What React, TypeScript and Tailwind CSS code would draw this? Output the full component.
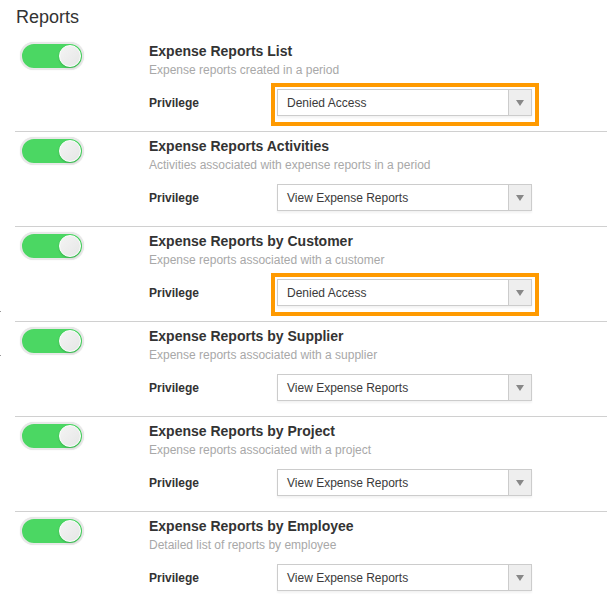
import React from "react";

type Item = { title: string; desc: string; value: string; highlight?: boolean };

const items: Item[] = [
  { title: "Expense Reports List", desc: "Expense reports created in a period", value: "Denied Access", highlight: true },
  { title: "Expense Reports Activities", desc: "Activities associated with expense reports in a period", value: "View Expense Reports" },
  { title: "Expense Reports by Customer", desc: "Expense reports associated with a customer", value: "Denied Access", highlight: true },
  { title: "Expense Reports by Supplier", desc: "Expense reports associated with a supplier", value: "View Expense Reports" },
  { title: "Expense Reports by Project", desc: "Expense reports associated with a project", value: "View Expense Reports" },
  { title: "Expense Reports by Employee", desc: "Detailed list of reports by employee", value: "View Expense Reports" },
];

function Toggle() {
  return (
    <div className="relative w-[64px] h-[28px] rounded-full bg-[#4bd763] border-2 border-[#e8e8e8] shadow-[0_0_1px_rgba(0,0,0,0.15)]">
      <div className="absolute right-[1px] top-[1px] w-[22px] h-[22px] rounded-full bg-gradient-to-br from-[#f4f4f4] to-[#e6e6e6] border border-white shadow-[0_1px_2px_rgba(0,0,0,0.2)]" />
    </div>
  );
}

function Select({ value, highlight }: { value: string; highlight?: boolean }) {
  return (
    <div className="relative w-[255px] h-[27px]">
      {highlight && (
        <div className="absolute left-[-6px] top-[-6px] right-[-7px] bottom-[-10px] border-4 border-[#ff9a00]" />
      )}
      <div className="relative flex h-full w-full border border-[#cccccc] bg-white shadow-[0_2px_2px_rgba(0,0,0,0.05)]">
        <div className="flex-1 flex items-center pl-[9px] text-[12px] text-[#3a3a3a]">{value}</div>
        <div className="w-[23px] h-full flex items-center justify-center bg-[#eeeeee] border-l border-[#cccccc]">
          <svg width="8" height="6" viewBox="0 0 8 6">
            <path d="M0 0 L8 0 L4 6 Z" fill="#888888" />
          </svg>
        </div>
      </div>
    </div>
  );
}

export default function App() {
  return (
    <div className="relative w-[607px] h-[607px] overflow-hidden bg-white" style={{ fontFamily: '"Liberation Sans", Arial, sans-serif' }}>
      <span className="absolute left-0 top-[311px] w-[1px] h-[1px] bg-[#999]" />
      <span className="absolute left-0 top-[355px] w-[1px] h-[1px] bg-[#999]" />
      <div className="pl-[16px] pt-[4px] pb-[7px] h-[37px]">
        <h1 className="text-[18px] leading-[26px] text-[#333333]">Reports</h1>
      </div>
      <div className="pl-[15px]">
        {items.map((it, i) => (
          <div key={i} className={`flex pt-[4px] pb-[15px] ${i > 0 ? "border-t border-[#d0d0d0]" : ""}`}>
            <div className="w-[134px] pl-[5px] pt-[1px]">
              <Toggle />
            </div>
            <div className="flex flex-col">
              <div className="text-[14px] leading-[20px] font-bold text-[#333333]">{it.title}</div>
              <div className="pt-[1px] text-[12px] leading-[16px] text-[#a8a8a8]">{it.desc}</div>
              <div className="flex items-center mt-[11px]">
                <div className="w-[128px] text-[12px] font-bold text-[#333333]">Privilege</div>
                <Select value={it.value} highlight={it.highlight} />
              </div>
            </div>
          </div>
        ))}
      </div>
    </div>
  );
}
